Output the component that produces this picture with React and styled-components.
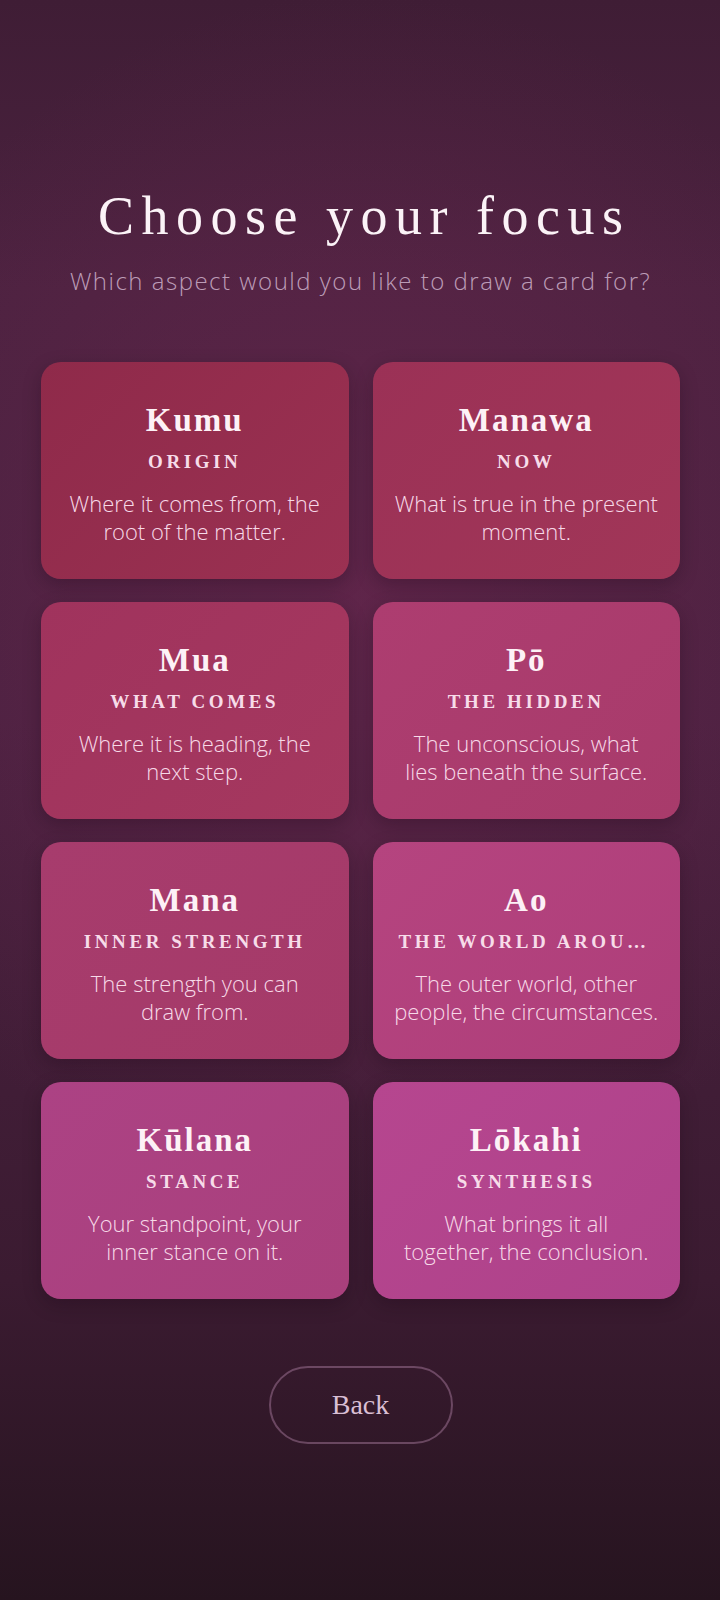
import React from 'react'
import styled, { createGlobalStyle } from 'styled-components'

const GlobalStyle = createGlobalStyle`
  html, body {
    margin: 0;
    padding: 0;
    background: #2a1524;
  }
  * {
    box-sizing: border-box;
  }
`

const Screen = styled.div`
  width: 720px;
  min-height: 1600px;
  display: flex;
  flex-direction: column;
  align-items: center;
  padding: 186px 40px 0 41px;
  background:
    radial-gradient(110% 55% at 50% 38%, rgba(112, 40, 82, 0.55) 0%, rgba(112, 40, 82, 0) 70%),
    linear-gradient(180deg, #3f1d35 0%, #4c2240 18%, #4a2140 45%, #3b1b31 80%, #26141f 100%);
`

const Title = styled.h1`
  margin: 0;
  font-family: 'Liberation Serif', 'DejaVu Serif', serif;
  font-weight: 400;
  font-size: 54px;
  line-height: 60px;
  letter-spacing: 7.5px;
  padding-left: 7.5px;
  color: #fbf3f7;
`

const Subtitle = styled.p`
  margin: 20px 0 0;
  font-family: 'Open Sans', 'Noto Sans', sans-serif;
  font-weight: 300;
  font-size: 24px;
  line-height: 30px;
  letter-spacing: 1.5px;
  color: #bc9cb7;
`

const Grid = styled.div`
  margin-top: 66px;
  width: 100%;
  display: grid;
  grid-template-columns: 1fr 1fr;
  column-gap: 24px;
  row-gap: 23px;
`

const Card = styled.button`
  height: 217px;
  border: none;
  border-radius: 20px;
  padding: 5px 14px 0;
  display: flex;
  flex-direction: column;
  align-items: center;
  justify-content: center;
  text-align: center;
  cursor: pointer;
  background: linear-gradient(135deg, ${p => p.$from} 0%, ${p => p.$to} 100%);
  box-shadow: 0 6px 18px rgba(20, 5, 15, 0.25);
  min-width: 0;
`

const Name = styled.div`
  font-family: 'Liberation Serif', 'DejaVu Serif', serif;
  font-weight: 700;
  font-size: 33px;
  line-height: 38px;
  letter-spacing: 2px;
  color: #fdf1f6;
`

const Aspect = styled.div`
  margin-top: 11px;
  width: 100%;
  padding: 0 12px;
  font-family: 'Liberation Serif', 'DejaVu Serif', serif;
  font-weight: 700;
  font-size: 19px;
  line-height: 24px;
  letter-spacing: 3.6px;
  color: #f7dce9;
  white-space: nowrap;
  overflow: hidden;
  text-overflow: ellipsis;
`

const Description = styled.p`
  margin: 15px 0 0;
  font-family: 'Open Sans', 'Noto Sans', sans-serif;
  font-weight: 300;
  font-size: 22px;
  line-height: 28px;
  white-space: pre-line;
  color: #f7d9e8;
`

const BackButton = styled.button`
  margin-top: 67px;
  width: 184px;
  height: 78px;
  border-radius: 39px;
  border: 2px solid rgba(200, 150, 190, 0.38);
  background: transparent;
  font-family: 'Liberation Serif', 'DejaVu Serif', serif;
  font-size: 28px;
  color: #d9bfd4;
  cursor: pointer;
`

const focuses = [
  { name: 'Kumu', aspect: 'ORIGIN', text: 'Where it comes from, the\nroot of the matter.', from: '#8f2a4a', to: '#9b3152' },
  { name: 'Manawa', aspect: 'NOW', text: 'What is true in the present\nmoment.', from: '#9b3156', to: '#a13658' },
  { name: 'Mua', aspect: 'WHAT COMES', text: 'Where it is heading, the\nnext step.', from: '#a0335d', to: '#a5385f' },
  { name: 'Pō', aspect: 'THE HIDDEN', text: 'The unconscious, what\nlies beneath the surface.', from: '#ad3d70', to: '#a83b6b' },
  { name: 'Mana', aspect: 'INNER STRENGTH', text: 'The strength you can\ndraw from.', from: '#a73c6d', to: '#a53a68' },
  { name: 'Ao', aspect: 'THE WORLD AROUND YOU', text: 'The outer world, other\npeople, the circumstances.', from: '#b5447f', to: '#ae3e7a' },
  { name: 'Kūlana', aspect: 'STANCE', text: 'Your standpoint, your\ninner stance on it.', from: '#ac4284', to: '#a9407c' },
  { name: 'Lōkahi', aspect: 'SYNTHESIS', text: 'What brings it all\ntogether, the conclusion.', from: '#b6468f', to: '#ae428a' },
]

const App = () => (
  <Screen>
    <GlobalStyle />
    <Title>Choose your focus</Title>
    <Subtitle>Which aspect would you like to draw a card for?</Subtitle>
    <Grid>
      {focuses.map(f => (
        <Card key={f.name} $from={f.from} $to={f.to}>
          <Name>{f.name}</Name>
          <Aspect>{f.aspect}</Aspect>
          <Description>{f.text}</Description>
        </Card>
      ))}
    </Grid>
    <BackButton>Back</BackButton>
  </Screen>
)

export default App
